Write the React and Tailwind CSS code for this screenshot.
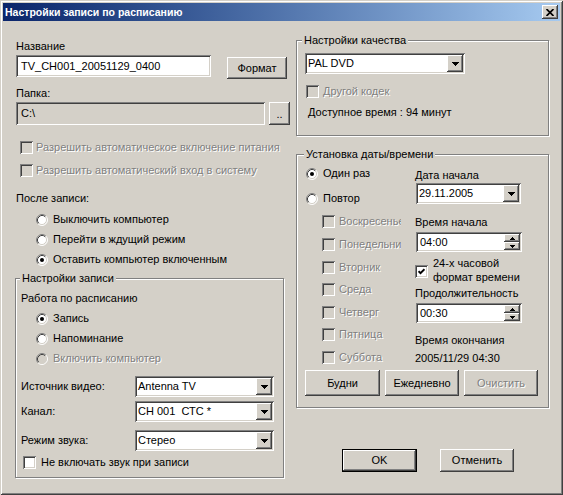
import React from "react";

const sunken =
  "shadow-[inset_1px_1px_0_#808080,inset_-1px_-1px_0_#fff,inset_2px_2px_0_#404040,inset_-2px_-2px_0_#d4d0c8]";
const raised =
  "shadow-[inset_-1px_-1px_0_#404040,inset_1px_1px_0_#fff,inset_-2px_-2px_0_#808080,inset_2px_2px_0_#d4d0c8]";
const etched = "border border-[#808080] shadow-[inset_1px_1px_0_#fff,1px_1px_0_#fff]";
const dis = "text-[#808080] [text-shadow:1px_1px_0_#fff]";

const Radio = ({ checked, disabled, label, className = "" }) => (
  <div className={`flex items-center h-[13px] ${className}`}>
    <svg width="12" height="12" viewBox="0 0 12 12" className="shrink-0">
      <circle cx="6" cy="6" r="5" fill={disabled ? "#d4d0c8" : "#fff"} />
      <path d="M2.11 9.89A5.5 5.5 0 0 1 9.89 2.11" stroke="#808080" fill="none" />
      <path d="M9.89 2.11A5.5 5.5 0 0 1 2.11 9.89" stroke="#fff" fill="none" />
      <path d="M2.82 9.18A4.5 4.5 0 0 1 9.18 2.82" stroke="#404040" fill="none" />
      <path d="M9.18 2.82A4.5 4.5 0 0 1 2.82 9.18" stroke="#d4d0c8" fill="none" />
      {checked && <circle cx="6" cy="6" r="2" fill="#000" />}
    </svg>
    <span className={`ml-[5px] whitespace-nowrap ${disabled ? dis : ""}`}>{label}</span>
  </div>
);

const Check = ({ checked, disabled, label, className = "", gap = "ml-[4px]" }) => (
  <div className={`flex items-center h-[13px] ${className}`}>
    <div
      className={`w-[13px] h-[13px] shrink-0 flex items-center justify-center ${sunken} ${
        disabled ? "bg-[#d4d0c8]" : "bg-white"
      }`}
    >
      {checked && (
        <svg width="7" height="7" viewBox="0 0 7 7">
          <path d="M0.5 3.2L2.5 5.2L6.5 1.2" stroke="#000" strokeWidth="2" fill="none" />
        </svg>
      )}
    </div>
    <span className={`${gap} whitespace-nowrap ${disabled ? dis : ""}`}>{label}</span>
  </div>
);

const Arrow = () => (
  <svg width="7" height="4" viewBox="0 0 7 4" shapeRendering="crispEdges">
    <path d="M0 0H7L3.5 4Z" fill="#000" />
  </svg>
);

const Combo = ({ value, className = "" }) => (
  <div className={`h-[21px] bg-white flex items-center p-[2px] ${sunken} ${className}`}>
    <span className="flex-1 pl-[1px] whitespace-pre">{value}</span>
    <div className={`w-[16px] h-[17px] bg-[#d4d0c8] flex items-center justify-center ${raised}`}>
      <Arrow />
    </div>
  </div>
);

const Spin = ({ value }) => (
  <div className={`h-[20px] w-[106px] ml-[1px] bg-white flex p-[2px] ${sunken}`}>
    <span className="flex-1 pl-[2px] self-center">{value}</span>
    <div className="w-[16px] flex flex-col">
      <div className={`h-[8px] bg-[#d4d0c8] flex items-center justify-center ${raised}`}>
        <svg width="5" height="3" viewBox="0 0 5 3" shapeRendering="crispEdges">
          <path d="M2.5 0L5 3H0Z" fill="#000" />
        </svg>
      </div>
      <div className={`flex-1 bg-[#d4d0c8] flex items-center justify-center ${raised}`}>
        <svg width="5" height="3" viewBox="0 0 5 3" shapeRendering="crispEdges">
          <path d="M0 0H5L2.5 3Z" fill="#000" />
        </svg>
      </div>
    </div>
  </div>
);

const Btn = ({ children, className = "", disabled }) => (
  <div className={`flex items-center justify-center bg-[#d4d0c8] ${raised} ${className}`}>
    <span className={disabled ? dis : ""}>{children}</span>
  </div>
);

const GroupTitle = ({ children, className = "" }) => (
  <div className={`-mt-[7px] w-fit px-[2px] bg-[#d4d0c8] ${className}`}>{children}</div>
);

const days = [
  ["Воскресенье", "mt-[10px]"],
  ["Понедельник", "mt-[10px]"],
  ["Вторник", "mt-[10px]"],
  ["Среда", "mt-[9px]"],
  ["Четверг", "mt-[10px]"],
  ["Пятница", "mt-[9px]"],
  ["Суббота", "mt-[10px]"],
];

export default function App() {
  return (
    <div
      className={`w-[563px] h-[495px] bg-[#d4d0c8] p-[3px] text-[11px] leading-[13px] text-black font-['Liberation_Sans',Arial,sans-serif] shadow-[inset_1px_1px_0_#d4d0c8,inset_-1px_-1px_0_#404040,inset_2px_2px_0_#fff,inset_-2px_-2px_0_#808080]`}
    >
      {/* title bar */}
      <div className="h-[18px] flex items-center bg-linear-to-r from-[#0a246a] to-[#a6caf0]">
        <span className="ml-[2px] flex-1 font-bold text-[10.5px] text-white">Настройки записи по расписанию</span>
        <div className={`w-[16px] h-[14px] mr-[2px] bg-[#d4d0c8] flex items-center justify-center ${raised}`}>
          <svg width="8" height="7" viewBox="0 0 8 7">
            <path d="M0.5 0L7.5 7M7.5 0L0.5 7" stroke="#000" strokeWidth="1.7" />
          </svg>
        </div>
      </div>

      <div className="flex">
        {/* left column */}
        <div className="ml-[11px] w-[276px] pt-[19px] flex flex-col">
          <div className="ml-[2px]">Название</div>
          <div className="mt-[2px] flex h-[24px]">
            <div className={`ml-[2px] w-[195px] h-[22px] bg-white flex items-center pl-[5px] ${sunken}`}>
              TV_CH001_20051129_0400
            </div>
            <Btn className="ml-[16px] mt-[2px] w-[60px] h-[22px]">Формат</Btn>
          </div>
          <div className="ml-[2px] mt-[8px]">Папка:</div>
          <div className="mt-[2px] flex h-[23px]">
            <div className={`ml-[2px] w-[249px] h-[23px] flex items-center pl-[5px] ${sunken}`}>C:\</div>
            <Btn className="ml-[4px] w-[21px] h-[23px] items-end pb-[4px]">..</Btn>
          </div>
          <Check disabled className="ml-[6px] mt-[16px]" gap="ml-[3px]" label="Разрешить автоматическое включение питания" />
          <Check disabled className="ml-[6px] mt-[10px]" gap="ml-[3px]" label="Разрешить автоматический вход в систему" />
          <div className="ml-[2px] mt-[15px]">После записи:</div>
          <Radio className="ml-[22px] mt-[8px]" label="Выключить компьютер" />
          <Radio className="ml-[22px] mt-[7px]" label="Перейти в ждущий режим" />
          <Radio className="ml-[22px] mt-[7px]" checked label="Оставить компьютер включенным" />

          <div className={`ml-[1px] mt-[12px] w-[269px] pb-[8px] flex flex-col ${etched}`}>
            <GroupTitle className="ml-[4px]">Настройки записи</GroupTitle>
            <div className="ml-[5px] mt-[7px]">Работа по расписанию</div>
            <Radio className="ml-[20px] mt-[7px]" checked label="Запись" />
            <Radio className="ml-[20px] mt-[7px]" label="Напоминание" />
            <Radio className="ml-[20px] mt-[7px]" disabled label="Включить компьютер" />
            <div className="mt-[11px] flex items-center">
              <span className="ml-[5px] w-[114px]">Источник видео:</span>
              <Combo className="w-[139px]" value="Antenna TV" />
            </div>
            <div className="mt-[4px] flex items-center">
              <span className="ml-[5px] w-[114px]">Канал:</span>
              <Combo className="w-[139px]" value="CH 001  СТС *" />
            </div>
            <div className="mt-[8px] flex items-center">
              <span className="ml-[5px] w-[114px]">Режим звука:</span>
              <Combo className="w-[139px]" value="Стерео" />
            </div>
            <Check className="ml-[7px] mt-[5px]" gap="ml-[5px]" label="Не включать звук при записи" />
          </div>
        </div>

        {/* right column */}
        <div className="ml-[6px] w-[253px] pt-[19px] flex flex-col">
          <div className={`pb-[16px] flex flex-col ${etched}`}>
            <GroupTitle className="ml-[5px]">Настройки качества</GroupTitle>
            <Combo className="ml-[8px] mt-[6px] w-[160px]" value="PAL DVD" />
            <Check disabled className="ml-[9px] mt-[11px]" gap="ml-[4px]" label="Другой кодек" />
            <div className="ml-[11px] mt-[8px]">Доступное время : 94 минут</div>
          </div>

          <div className={`mt-[18px] pb-[11px] flex flex-col ${etched}`}>
            <GroupTitle className="ml-[7px]">Установка даты/времени</GroupTitle>
            <div className="flex">
              <div className="w-[118px] flex flex-col">
                <Radio className="ml-[9px] mt-[6px]" checked label="Один раз" />
                <Radio className="ml-[9px] mt-[12px]" label="Повтор" />
                {days.map(([d, m]) => (
                  <div key={d} className={`ml-[25px] w-[79px] overflow-hidden ${m}`}>
                    <Check disabled gap="ml-[4px]" label={d} />
                  </div>
                ))}
              </div>
              <div className="flex flex-col">
                <div className="mt-[8px]">Дата начала</div>
                <Combo className="ml-[1px] mt-[1px] w-[105px]" value="29.11.2005" />
                <div className="mt-[12px]">Время начала</div>
                <div className="mt-[3px]">
                  <Spin value="04:00" />
                </div>
                <div className="mt-[4px] flex">
                  <div className={`mt-[9px] w-[13px] h-[13px] bg-white flex items-center justify-center ${sunken}`}>
                    <svg width="7" height="7" viewBox="0 0 7 7">
                      <path d="M0.5 3.2L2.5 5.2L6.5 1.2" stroke="#000" strokeWidth="2" fill="none" />
                    </svg>
                  </div>
                  <div className="ml-[5px] leading-[14px]">
                    24-х часовой
                    <br />
                    формат времени
                  </div>
                </div>
                <div className="mt-[3px]">Продолжительность</div>
                <div className="mt-[3px]">
                  <Spin value="00:30" />
                </div>
                <div className="mt-[11px]">Время окончания</div>
                <div className="mt-[5px]">2005/11/29 04:30</div>
              </div>
            </div>
            <div className="mt-[5px] ml-[8px] flex gap-[5px]">
              <Btn className="w-[75px] h-[26px]">Будни</Btn>
              <Btn className="w-[74px] h-[26px]">Ежедневно</Btn>
              <Btn className="w-[74px] h-[26px]" disabled>
                Очистить
              </Btn>
            </div>
          </div>

          <div className="mt-[41px] flex">
            <div className="ml-[46px] w-[75px] h-[23px] border border-black">
              <Btn className="w-full h-full">OK</Btn>
            </div>
            <Btn className="ml-[23px] w-[74px] h-[23px]">Отменить</Btn>
          </div>
        </div>
      </div>
    </div>
  );
}
